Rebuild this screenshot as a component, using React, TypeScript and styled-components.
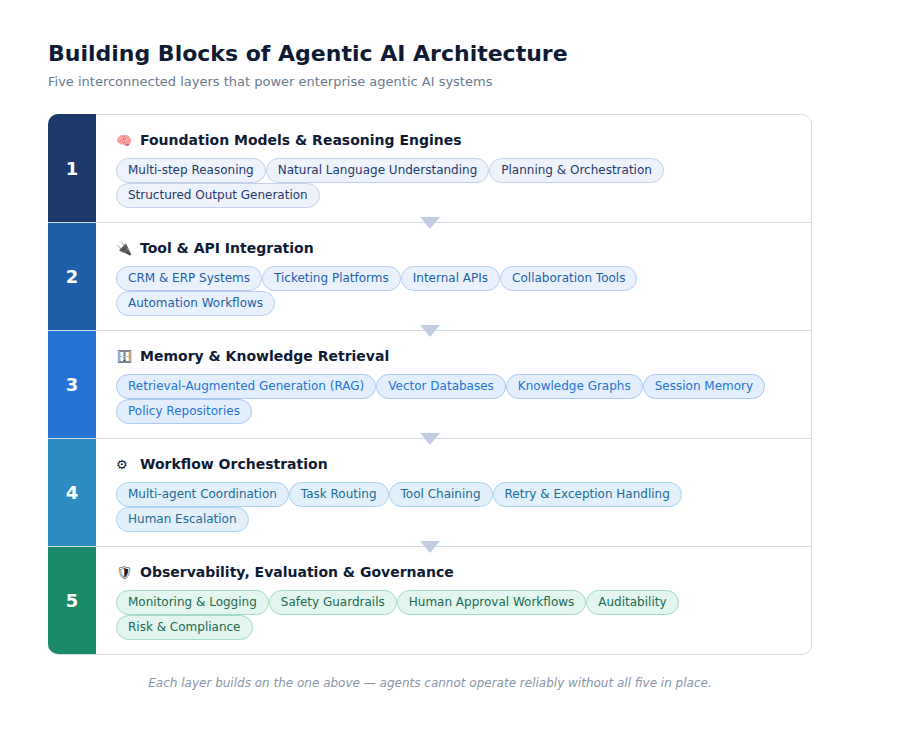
import React from "react";
import styled, { createGlobalStyle } from "styled-components";

const Global = createGlobalStyle`
  body { margin: 0; background: #fff; font-family: "DejaVu Sans", "Noto Sans", sans-serif; }
`;

const Page = styled.div`
  padding: 40px 48px 0 48px;
  width: 764px;
`;
const Title = styled.h1`
  margin: 0;
  font-size: 22px;
  font-weight: 700;
  color: #0f1b35;
  line-height: 28px;
`;
const Subtitle = styled.p`
  margin: 6px 0 0;
  font-size: 13px;
  color: #6b7a90;
`;
const Card = styled.div`
  margin-top: 25px;
  border: 1px solid #d3dbe8;
  border-radius: 10px;
  overflow: visible;
`;
const Row = styled.div<{ $last: boolean }>`
  position: relative;
  display: flex;
  height: 107px;
  border-bottom: ${(p) => (p.$last ? "none" : "1px solid #d3dbe8")};
`;
const Num = styled.div<{ $bg: string; $first: boolean; $last: boolean }>`
  width: 48px;
  flex: none;
  background: ${(p) => p.$bg};
  color: #fff;
  font-weight: 700;
  font-size: 18px;
  display: flex;
  align-items: center;
  justify-content: center;
  margin-left: -1px;
  margin-top: ${(p) => (p.$first ? "-1px" : "0")};
  border-radius: ${(p) => (p.$first ? "10px 0 0 0" : p.$last ? "0 0 0 10px" : "0")};
`;
const Body = styled.div`
  padding: 15px 20px 0 20px;
  flex: 1;
`;
const Heading = styled.div`
  display: flex;
  align-items: center;
  gap: 10px;
  font-size: 14px;
  font-weight: 700;
  color: #0f1b35;
  height: 20px;
`;
const Icon = styled.span`
  font-size: 13px;
  font-weight: 400;
  width: 14px;
`;
const Tags = styled.div`
  display: flex;
  flex-wrap: wrap;
  margin-top: 8px;
  row-gap: 0;
`;
const Tag = styled.span<{ $bg: string; $bd: string; $fg: string }>`
  font-size: 12px;
  line-height: 23px;
  padding: 0 11px;
  border-radius: 13px;
  background: ${(p) => p.$bg};
  border: 1px solid ${(p) => p.$bd};
  color: ${(p) => p.$fg};
`;
const Arrow = styled.div`
  position: absolute;
  left: 371px;
  bottom: -7px;
  width: 0;
  height: 0;
  border-left: 10px solid transparent;
  border-right: 10px solid transparent;
  border-top: 12px solid #c3cde0;
  z-index: 2;
`;
const Footer = styled.p`
  margin: 21px 0 0;
  text-align: center;
  font-size: 12px;
  font-style: italic;
  color: #8a96a8;
`;

const layers = [
  { n: 1, icon: "🧠", title: "Foundation Models & Reasoning Engines", c: "#1b3a6b", bg: "#eef2fb", bd: "#c5d1ea", fg: "#1e3a6b",
    tags: ["Multi-step Reasoning", "Natural Language Understanding", "Planning & Orchestration", "Structured Output Generation"] },
  { n: 2, icon: "🔌", title: "Tool & API Integration", c: "#1f5ea8", bg: "#e9f1fc", bd: "#b8cdee", fg: "#1f5fa8",
    tags: ["CRM & ERP Systems", "Ticketing Platforms", "Internal APIs", "Collaboration Tools", "Automation Workflows"] },
  { n: 3, icon: "🗄", title: "Memory & Knowledge Retrieval", c: "#2474d4", bg: "#e3eefc", bd: "#a9c9f2", fg: "#2474d4",
    tags: ["Retrieval-Augmented Generation (RAG)", "Vector Databases", "Knowledge Graphs", "Session Memory", "Policy Repositories"] },
  { n: 4, icon: "⚙", title: "Workflow Orchestration", c: "#2e8bc0", bg: "#e1f0fa", bd: "#a8d3ec", fg: "#1e6b96",
    tags: ["Multi-agent Coordination", "Task Routing", "Tool Chaining", "Retry & Exception Handling", "Human Escalation"] },
  { n: 5, icon: "🛡", title: "Observability, Evaluation & Governance", c: "#1a8a6a", bg: "#e3f5ef", bd: "#a3dcc6", fg: "#1a6b50",
    tags: ["Monitoring & Logging", "Safety Guardrails", "Human Approval Workflows", "Auditability", "Risk & Compliance"] },
];

export default function App() {
  return (
    <Page>
      <Global />
      <Title>Building Blocks of Agentic AI Architecture</Title>
      <Subtitle>Five interconnected layers that power enterprise agentic AI systems</Subtitle>
      <Card>
        {layers.map((l, i) => {
          const last = i === layers.length - 1;
          return (
            <Row key={l.n} $last={last}>
              <Num $bg={l.c} $first={i === 0} $last={last}>{l.n}</Num>
              <Body>
                <Heading><Icon>{l.icon}</Icon>{l.title}</Heading>
                <Tags>
                  {l.tags.map((t) => (
                    <Tag key={t} $bg={l.bg} $bd={l.bd} $fg={l.fg}>{t}</Tag>
                  ))}
                </Tags>
              </Body>
              {!last && <Arrow />}
            </Row>
          );
        })}
      </Card>
      <Footer>Each layer builds on the one above — agents cannot operate reliably without all five in place.</Footer>
    </Page>
  );
}
